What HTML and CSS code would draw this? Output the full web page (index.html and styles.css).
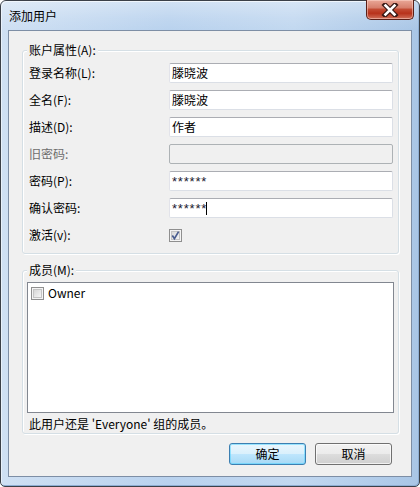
FILE: index.html
```html
<!DOCTYPE html>
<html lang="zh-CN">
<head>
<meta charset="utf-8">
<title>添加用户</title>
<link rel="stylesheet" href="styles.css">
</head>
<body>
<div class="window">
  <div class="titlebar">
    <span class="title">添加用户</span>
    <div class="close">
      <svg width="20" height="14" viewBox="0 0 20 14"><path d="M5 2 L15 12 M15 2 L5 12" stroke="#3a1a16" stroke-width="5" stroke-linecap="square"/><path d="M5.5 2.5 L14.5 11.5 M14.5 2.5 L5.5 11.5" stroke="#fff" stroke-width="2.6" stroke-linecap="square"/></svg>
    </div>
  </div>
  <div class="frame">
    <div class="panel">
      <div class="group group-account">
        <span class="legend">账户属性(A):</span>
        <div class="row"><span class="label">登录名称(L):</span><div class="input">滕晓波</div></div>
        <div class="row"><span class="label">全名(F):</span><div class="input">滕晓波</div></div>
        <div class="row"><span class="label">描述(D):</span><div class="input">作者</div></div>
        <div class="row"><span class="label disabled">旧密码:</span><div class="input input-disabled"></div></div>
        <div class="row"><span class="label">密码(P):</span><div class="input pw">******</div></div>
        <div class="row"><span class="label">确认密码:</span><div class="input pw">******<span class="caret"></span></div></div>
        <div class="row"><span class="label">激活(v):</span>
          <svg class="check" width="13" height="13" viewBox="0 0 13 13"><defs><linearGradient id="cg" x1="0" y1="0" x2="1" y2="1"><stop offset="0" stop-color="#d8d8d8"/><stop offset="1" stop-color="#f6f6f6"/></linearGradient></defs><rect x="0.5" y="0.5" width="12" height="12" fill="#f4f4f4" stroke="#8f8f8f"/><rect x="2.5" y="2.5" width="8" height="8" fill="url(#cg)" stroke="#c4c4c4"/><path d="M3.3 6.6 L5.4 9.6 L9.6 2.6" fill="none" stroke="#4a5d8f" stroke-width="1.7"/></svg>
        </div>
      </div>
      <div class="group group-members">
        <span class="legend">成员(M):</span>
        <div class="listbox">
          <div class="item">
            <svg class="check" width="13" height="13" viewBox="0 0 13 13"><defs><linearGradient id="cg2" x1="0" y1="0" x2="1" y2="1"><stop offset="0" stop-color="#d4d4d4"/><stop offset="1" stop-color="#f8f8f8"/></linearGradient></defs><rect x="0.5" y="0.5" width="12" height="12" fill="#f4f4f4" stroke="#8f8f8f"/><rect x="2.5" y="2.5" width="8" height="8" fill="url(#cg2)" stroke="#c4c4c4"/></svg>
            <span>Owner</span>
          </div>
        </div>
        <div class="note">此用户还是 'Everyone' 组的成员。</div>
      </div>
      <div class="buttons">
        <button class="btn btn-default">确定</button>
        <button class="btn">取消</button>
      </div>
    </div>
  </div>
</div>
</body>
</html>
```

FILE: styles.css
```css
* { box-sizing: border-box; }
html, body { margin: 0; padding: 0; background: #ffffff; }
body {
  font-family: "Noto Sans CJK SC", sans-serif;
  font-size: 12px;
  color: #000;
}
.window {
  width: 420px;
  height: 487px;
  border: 1px solid #3b4048;
  border-radius: 6px 6px 5px 5px;
  background: linear-gradient(90deg, #cfe0f3 0%, #b9d2ee 40%, #c2d8f0 70%, #a9c6e6 100%);
  display: flex;
  flex-direction: column;
  box-shadow: inset 1px 1px 0 #e8f1fb, inset -1px -1px 0 #8eaed3;
}
.titlebar {
  height: 29px;
  display: flex;
  align-items: flex-start;
  justify-content: space-between;
  padding-left: 8px;
  padding-right: 5px;
  background: linear-gradient(180deg, rgba(255,255,255,0.35) 0%, rgba(255,255,255,0.1) 60%, rgba(255,255,255,0) 100%);
  border-radius: 5px 5px 0 0;
}
.title {
  line-height: 16px;
  margin-top: 7px;
  font-size: 12px;
  color: #000;
}
.close {
  width: 48px;
  height: 20px;
  margin-top: -1px;
  border: 1px solid #5a1f17;
  border-top: 0;
  border-radius: 0 0 5px 5px;
  background: linear-gradient(180deg, #e9a898 0%, #d7806d 40%, #c24a32 50%, #b7321b 70%, #d0705a 100%);
  box-shadow: inset 0 0 0 1px rgba(255,220,210,0.5);
  display: flex;
  align-items: center;
  justify-content: center;
}
.frame {
  flex: 1;
  padding: 0 7px 9px 7px;
  display: flex;
}
.panel {
  flex: 1;
  background: #f0f0f0;
  border: 1px solid #7d8ea5;
  padding: 19px 12px 11px 13px;
  display: flex;
  flex-direction: column;
}
.group {
  position: relative;
  border: 1px solid #d5dfe5;
  border-radius: 3px;
  box-shadow: inset 1px 1px 0 #fff, 1px 1px 0 #fff;
}
.legend {
  position: absolute;
  top: -8px;
  left: 4px;
  padding: 0 2px;
  line-height: 14px;
  background: #f0f0f0;
}
.group-account {
  padding: 12px 5px 8px 6px;
  display: flex;
  flex-direction: column;
  gap: 7px;
}
.row {
  height: 20px;
  display: flex;
  align-items: center;
}
.label {
  width: 140px;
  flex: none;
  line-height: 16px;
}
.label.disabled { color: #6d6d6d; }
.input {
  width: 224px;
  height: 20px;
  background: #fff;
  border: 1px solid #dbdfe6;
  border-top-color: #abadb3;
  border-left-color: #e2e3ea;
  border-radius: 2px;
  padding: 0 2px;
  line-height: 18px;
  display: flex;
  align-items: center;
}
.input-disabled {
  background: #f0f0f0;
  border: 1px solid #adb2b5;
}
.pw {
  font-family: "Liberation Sans", sans-serif;
  font-size: 13px;
  letter-spacing: 0.8px;
  align-items: flex-start;
  padding-top: 1px;
  color: #1a1a30;
}
.caret {
  display: inline-block;
  width: 1px;
  height: 13px;
  background: #000;
  margin-top: 2px;
  margin-left: -1px;
}
.check { flex: none; display: block; }
.group-members {
  margin-top: 16px;
  padding: 11px 4px 1px 4px;
}
.listbox {
  height: 131px;
  background: #fff;
  border: 1px solid #828790;
  padding: 3px 3px;
}
.item {
  display: flex;
  align-items: center;
  gap: 4px;
  height: 14px;
}
.item span { line-height: 14px; }
.note {
  margin-top: 3px;
  margin-left: 2px;
  line-height: 16px;
}
.buttons {
  margin-top: 9px;
  display: flex;
  justify-content: flex-end;
  gap: 9px;
  padding-right: 7px;
}
.btn {
  width: 77px;
  height: 22px;
  border: 1px solid #707070;
  border-radius: 3px;
  background: linear-gradient(180deg, #f2f2f2 0%, #ebebeb 50%, #dddddd 51%, #cfcfcf 100%);
  box-shadow: inset 0 0 0 1px rgba(255,255,255,0.7);
  font-family: "Noto Sans CJK SC", sans-serif;
  font-size: 12px;
  color: #000;
  padding: 0;
  line-height: 18px;
}
.btn-default {
  border-color: #3c7fb1;
  background: linear-gradient(180deg, #eaf6fd 0%, #d9f0fc 50%, #bee6fd 51%, #a7d9f5 100%);
  box-shadow: inset 0 0 0 1px #48d1ff80;
}
```
